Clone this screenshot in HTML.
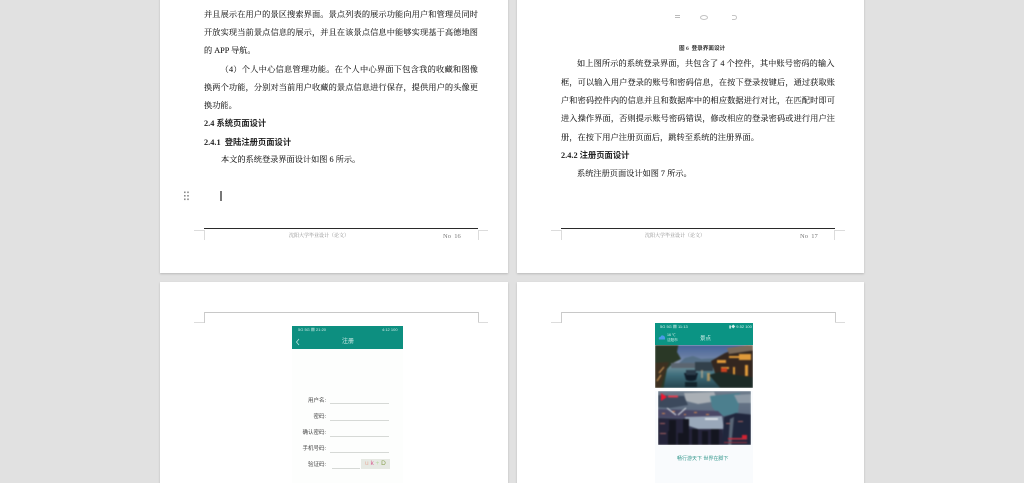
<!DOCTYPE html>
<html lang="zh"><head><meta charset="utf-8">
<style>
html,body{margin:0;padding:0;background:#e1e1e1;width:1024px;height:483px;overflow:hidden}
#r{position:relative;width:1024px;height:483px;overflow:hidden;font-family:"Liberation Serif","Noto Serif CJK SC",serif;color:#222}
.p{position:absolute;background:#fff;box-shadow:0 1px 2px rgba(0,0,0,.18)}
.a{position:absolute}
.l{position:absolute;font-size:8.2px;line-height:12px;height:12px;white-space:nowrap;color:#2a2a2a;text-shadow:0 0 .3px #555;filter:blur(.3px)}
.j{text-align:justify;text-align-last:justify;white-space:normal;overflow:hidden}
.h{font-family:"Liberation Serif","Noto Sans CJK SC",sans-serif;font-weight:bold;color:#222;font-size:8.3px;text-shadow:none}
.f{position:absolute;font-size:5px;line-height:8px;white-space:nowrap;color:#888;filter:blur(.15px)}
.g{position:absolute;background:#dcdcdc}
.s{font-family:"Liberation Sans","Noto Sans CJK SC",sans-serif}
.lb{position:absolute;font-family:"Liberation Sans","Noto Sans CJK SC",sans-serif;font-size:5.5px;line-height:8px;color:#444;text-align:right;white-space:nowrap;filter:blur(.25px)}
.u{position:absolute;height:1.4px;background:#d6d9d6}
</style></head><body><div id="r">
<div class="p" style="left:160px;top:-5px;width:348px;height:278px"></div>
<div class="p" style="left:516.5px;top:-5px;width:347.5px;height:278px"></div>
<div class="p" style="left:160px;top:282px;width:348px;height:210px"></div>
<div class="p" style="left:516.5px;top:282px;width:347.5px;height:210px"></div>

<div class="l j" style="left:204px;top:9px;width:274px">并且展示在用户的景区搜索界面。景点列表的展示功能向用户和管理员同时</div>
<div class="l j" style="left:204px;top:27px;width:274px">开放实现当前景点信息的展示，并且在该景点信息中能够实现基于高德地图</div>
<div class="l" style="left:204px;top:45px">的 APP 导航。</div>
<div class="l j" style="left:220.5px;top:64px;width:257.5px">（4）个人中心信息管理功能。在个人中心界面下包含我的收藏和图像更</div>
<div class="l j" style="left:204px;top:82px;width:274px">换两个功能，分别对当前用户收藏的景点信息进行保存，提供用户的头像更</div>
<div class="l" style="left:204px;top:100px">换功能。</div>
<div class="l h" style="left:204px;top:118px">2.4 系统页面设计</div>
<div class="l h" style="left:204px;top:136.5px">2.4.1&nbsp; 登陆注册页面设计</div>
<div class="l" style="left:221px;top:154px">本文的系统登录界面设计如图 6 所示。</div>

<svg class="a" style="left:183px;top:191px" width="7" height="10"><g fill="#8a8a8a"><rect x="1" y="0.5" width="1.6" height="1.6"/><rect x="4.2" y="0.5" width="1.6" height="1.6"/><rect x="1" y="4" width="1.6" height="1.6"/><rect x="4.2" y="4" width="1.6" height="1.6"/><rect x="1" y="7.5" width="1.6" height="1.6"/><rect x="4.2" y="7.5" width="1.6" height="1.6"/></g></svg>
<div class="a" style="left:220px;top:191px;width:2px;height:10px;background:#777"></div>

<div class="a" style="left:204px;top:228px;width:274px;height:1.3px;background:#2a2a2a"></div>
<div class="g" style="left:194px;top:230px;width:10px;height:1px"></div>
<div class="g" style="left:478px;top:230px;width:10px;height:1px"></div>
<div class="g" style="left:204px;top:230px;width:1px;height:10px"></div>
<div class="g" style="left:478px;top:230px;width:1px;height:10px"></div>
<div class="f" style="left:289px;top:233px">沈阳大学毕业设计（论文）</div>
<div class="f" style="left:443px;top:233px;font-size:6.5px;color:#777">No&nbsp; 16</div>

<div class="a" style="left:675px;top:15px;width:5px;height:1px;background:#bbb;box-shadow:0 2px 0 #bbb"></div>
<div class="a" style="left:700px;top:15px;width:6px;height:3px;border:1px solid #c4c4c4;border-radius:50%"></div>
<div class="a" style="left:732px;top:15px;width:4px;height:3px;border:1px solid #c4c4c4;border-left:0;border-radius:0 3px 3px 0"></div>

<div class="l h" style="left:679px;top:42.5px;font-size:5.6px;color:#333">图 6&nbsp; 登录界面设计</div>
<div class="l j" style="left:577px;top:58px;width:257.5px">如上图所示的系统登录界面，共包含了 4 个控件，其中账号密码的输入</div>
<div class="l j" style="left:561px;top:77px;width:274px">框，可以输入用户登录的账号和密码信息，在按下登录按键后，通过获取账</div>
<div class="l j" style="left:561px;top:95px;width:274px">户和密码控件内的信息并且和数据库中的相应数据进行对比，在匹配时即可</div>
<div class="l j" style="left:561px;top:113px;width:274px">进入操作界面，否则提示账号密码错误，修改相应的登录密码或进行用户注</div>
<div class="l j" style="left:561px;top:132px;width:198px">册，在按下用户注册页面后，跳转至系统的注册界面。</div>
<div class="l h" style="left:561px;top:150px">2.4.2 注册页面设计</div>
<div class="l" style="left:577px;top:168px">系统注册页面设计如图 7 所示。</div>

<div class="a" style="left:561px;top:228px;width:274px;height:1.3px;background:#2a2a2a"></div>
<div class="g" style="left:551px;top:230px;width:10px;height:1px"></div>
<div class="g" style="left:835px;top:230px;width:10px;height:1px"></div>
<div class="g" style="left:561px;top:230px;width:1px;height:10px"></div>
<div class="g" style="left:834px;top:230px;width:1px;height:10px"></div>
<div class="f" style="left:645px;top:233px">沈阳大学毕业设计（论文）</div>
<div class="f" style="left:800px;top:233px;font-size:6.5px;color:#777">No&nbsp; 17</div>

<div class="a" style="left:204px;top:312px;width:274px;height:1px;background:#c8c8c8"></div>
<div class="g" style="left:204px;top:312px;width:1px;height:11px;background:#ccc"></div>
<div class="g" style="left:478px;top:312px;width:1px;height:11px;background:#ccc"></div>
<div class="g" style="left:194px;top:322px;width:10px;height:1px"></div>
<div class="g" style="left:478px;top:322px;width:10px;height:1px"></div>

<div class="a" style="left:561px;top:312px;width:274px;height:1px;background:#c8c8c8"></div>
<div class="g" style="left:561px;top:312px;width:1px;height:11px;background:#ccc"></div>
<div class="g" style="left:835px;top:312px;width:1px;height:11px;background:#ccc"></div>
<div class="g" style="left:551px;top:322px;width:10px;height:1px"></div>
<div class="g" style="left:835px;top:322px;width:10px;height:1px"></div>

<!-- registration phone -->
<div class="a" style="left:292px;top:326px;width:111px;height:157px;background:#fdfefd"></div>
<div class="a" style="left:292px;top:326px;width:111px;height:23px;background:#0d8f80"></div>
<div class="a s" style="left:298px;top:326px;font-size:4px;line-height:8px;color:#cfe9e5;white-space:nowrap">5G 5G ▩ 21:20</div>
<div class="a s" style="left:382px;top:326px;font-size:4px;line-height:8px;color:#cfe9e5;white-space:nowrap">4:12 100</div>
<svg class="a" style="left:295px;top:338px" width="6" height="8"><path d="M4 1 L1.5 4 L4 7" fill="none" stroke="#b9e2dc" stroke-width=".8"/></svg>
<div class="a s" style="left:342px;top:338px;font-size:6px;line-height:9px;color:#d8f0ec;white-space:nowrap">注册</div>
<div class="lb" style="left:296px;top:397px;width:30px">用户名:</div>
<div class="u" style="left:330px;top:403px;width:59px"></div>
<div class="lb" style="left:296px;top:413px;width:30px">密码:</div>
<div class="u" style="left:330px;top:419.5px;width:59px"></div>
<div class="lb" style="left:296px;top:429px;width:30px">确认密码:</div>
<div class="u" style="left:330px;top:435.5px;width:59px"></div>
<div class="lb" style="left:296px;top:445px;width:30px">手机号码:</div>
<div class="u" style="left:330px;top:452px;width:59px"></div>
<div class="lb" style="left:296px;top:461px;width:30px">验证码:</div>
<div class="u" style="left:332px;top:468px;width:28px"></div>
<div class="a" style="left:361px;top:459px;width:29px;height:10px;background:#e6e9e3"></div>
<div class="a s" style="left:365px;top:459px;font-size:6.5px;line-height:10px;white-space:nowrap;filter:blur(.3px)"><span style="color:#e7b0a0">u</span> <span style="color:#d65a90">k</span> <span style="color:#b8d8a0">+</span> <span style="color:#88a050">D</span></div>

<!-- scenic phone -->
<div class="a" style="left:655px;top:323px;width:98px;height:160px;background:#f9fbfd"></div>
<div class="a" style="left:655px;top:323px;width:98px;height:22px;background:#0b9484"></div>
<div class="a s" style="left:660px;top:323px;font-size:4px;line-height:8px;color:#d6efeb;white-space:nowrap">5G 5G ▩ 11:13</div>
<div class="a s" style="left:729px;top:323px;font-size:4px;line-height:8px;color:#d6efeb;white-space:nowrap">▮◆ 9.52 100</div>
<svg class="a" style="left:658px;top:334px" width="8" height="6"><path d="M1 5.5 Q0 3 2.5 3 Q3 1 5 1.5 Q7.5 2 7 5.5Z" fill="#4a9be8"/></svg>
<div class="a s" style="left:667px;top:333px;font-size:3.6px;line-height:5px;color:#d6efeb;white-space:nowrap">16 ℃<br>沈阳市</div>
<div class="a s" style="left:700px;top:334.5px;font-size:5.5px;line-height:8px;color:#d6efeb;white-space:nowrap">景点</div>

<div class="a" style="left:655px;top:345px;width:98px;height:43px;overflow:hidden">
<svg style="display:block;filter:blur(.9px)" width="98" height="43" viewBox="0 0 98 43">
<defs><linearGradient id="sk" x1="0" y1="0" x2="0" y2="1"><stop offset="0" stop-color="#3b5a94"/><stop offset=".7" stop-color="#6f83a6"/><stop offset="1" stop-color="#a8aab4"/></linearGradient>
<linearGradient id="wa" x1="0" y1="0" x2="0" y2="1"><stop offset="0" stop-color="#7f98a0"/><stop offset=".4" stop-color="#3f6e7c"/><stop offset="1" stop-color="#1f3a42"/></linearGradient></defs>
<rect x="-3" y="-3" width="104" height="24" fill="url(#sk)"/>
<path d="M24 18 L30 13 L38 11 L46 14 L64 13 L64 20 L24 20Z" fill="#566f86"/>
<rect x="-3" y="19" width="104" height="27" fill="url(#wa)"/>
<path d="M-3 -3 H24 L22 7 L26 14 L18 18 L12 24 L8 46 H-3Z" fill="#2a3826"/>
<path d="M-3 18 L14 17 L10 28 L5 46 H-3Z" fill="#3c3020"/>
<path d="M4 28 L9 22 M2 36 L6 30" stroke="#c89050" stroke-width="1.2"/>
<rect x="16" y="18" width="40" height="5" fill="#5b6570"/>
<rect x="40" y="17" width="18" height="9" fill="#32404a"/>
<path d="M56 16 L70 8 L101 -3 V34 L78 33 L60 28Z" fill="#33261f"/>
<path d="M72 3 L101 -1 V5 L74 9Z" fill="#7a6a5a"/>
<g fill="#e09a3a"><rect x="74" y="11" width="18" height="2"/><rect x="84" y="9" width="12" height="6"/><rect x="62" y="15" width="9" height="3"/><rect x="66" y="22" width="8" height="2"/><rect x="78" y="22" width="2" height="9"/><rect x="90" y="20" width="3" height="11"/><rect x="88" y="37" width="7" height="3"/></g>
<rect x="66" y="23" width="6" height="4" fill="#c84020"/>
<path d="M54 30 L64 27 L101 33 V46 H68Z" fill="#1c2a26"/>
<path d="M29 28 H43 L41 35 Q36 37 31 35Z" fill="#101c28"/>
<rect x="31" y="25" width="10" height="5" fill="#2a3a48"/>
<rect x="30" y="37" width="12" height="5" fill="#12242c"/>
<rect x="52" y="28" width="3" height="8" fill="#d8a860" opacity=".7"/>
<rect x="46" y="25" width="2" height="8" fill="#c8b090" opacity=".6"/>
</svg></div>
<div class="a" style="left:655px;top:388px;width:98px;height:3px;background:#fff"></div>

<div class="a" style="left:658px;top:391px;width:93px;height:54px;overflow:hidden">
<svg style="display:block;filter:blur(.9px)" width="93" height="54" viewBox="0 0 93 54">
<defs><linearGradient id="s2" x1="0" y1="0" x2="0" y2="1"><stop offset="0" stop-color="#6e7d8c"/><stop offset=".4" stop-color="#5e6c80"/><stop offset=".6" stop-color="#3a3f58"/><stop offset="1" stop-color="#1e2034"/></linearGradient></defs>
<rect x="-3" y="-3" width="99" height="60" fill="url(#s2)"/>
<path d="M26 2 L56 1 L60 10 L40 13 L28 10Z" fill="#aab0b6"/>
<path d="M-3 4 L26 5 L30 14 L12 17 L-3 16Z" fill="#3c495c"/>
<path d="M52 5 L82 2 L80 22 L62 26 L54 16Z" fill="#4c7f8e"/>
<path d="M76 4 L96 3 V12 L80 12Z" fill="#8e9aa6"/>
<path d="M-3 18 L60 20 L66 26 L30 27 L-3 26Z" fill="#4a4866"/>
<g fill="#d88850"><rect x="4" y="22" width="3" height="1"/><rect x="14" y="20" width="3" height="1"/><rect x="26" y="23" width="2" height="1"/><rect x="36" y="21" width="3" height="1"/><rect x="48" y="23" width="3" height="1"/></g>
<path d="M27 26 L64 25 L66 38 L40 38 L28 34Z" fill="#9aa8ba"/>
<path d="M-3 27 L28 28 L30 38 H64 L66 57 H-3Z" fill="#25243a"/>
<path d="M64 57 L66 26 L78 22 L96 24 V57Z" fill="#20263c"/>
<path d="M70 57 L72 28 L76 26 L73 57Z" fill="#5a6676"/>
<g fill="#14151f"><rect x="10" y="40" width="6" height="17"/><rect x="11" y="29" width="7" height="28"/><rect x="20" y="42" width="5" height="15"/><rect x="25" y="28" width="6" height="29"/><rect x="34" y="38" width="6" height="19"/><rect x="44" y="40" width="6" height="17"/><rect x="53" y="38" width="8" height="19"/></g>
<path d="M9 17 L18 24 M28 17 L20 24" stroke="#e4eaee" stroke-width="1" fill="none"/>
<path d="M47 28 H60" stroke="#eef0f2" stroke-width="1.5"/>
<path d="M3 2 L9 6 L3 10Z" fill="#f01830"/>
<rect x="10" y="4.5" width="10" height="2" fill="#e04050"/>
<g fill="#a86060"><rect x="2" y="32" width="5" height="1"/><rect x="2" y="42" width="6" height="1"/><rect x="68" y="32" width="4" height="1"/><rect x="80" y="30" width="5" height="1"/></g>
<rect x="70" y="47" width="19" height="1.6" fill="#c03040"/>
<rect x="84" y="44" width="5" height="3" fill="#d82030"/>
<rect x="66" y="51" width="23" height="1" fill="#9a3040"/>
</svg></div>
<div class="a s" style="left:677px;top:455px;font-size:5px;line-height:8px;color:#36998e;white-space:nowrap;filter:blur(.15px)">畅行游天下 世界在脚下</div>
</div></body></html>
